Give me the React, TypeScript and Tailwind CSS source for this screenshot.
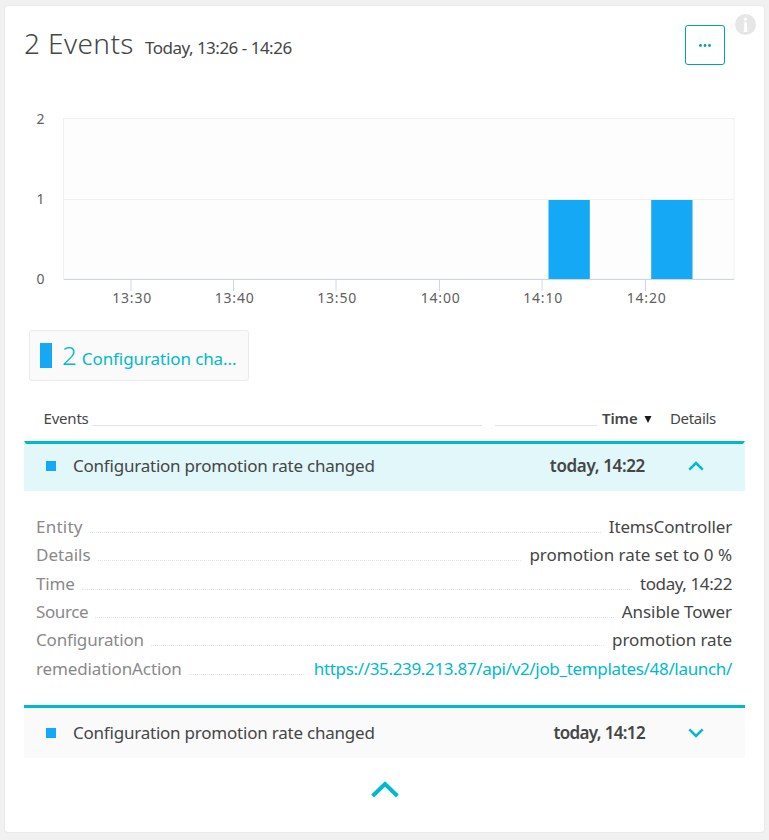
import React from "react";

const ticks = [
  { x: 131, label: "13:30" },
  { x: 233.5, label: "13:40" },
  { x: 336, label: "13:50" },
  { x: 439.5, label: "14:00" },
  { x: 542, label: "14:10" },
  { x: 645.5, label: "14:20" },
];

const details = [
  { label: "Entity", labelClass: "tracking-[0.25px]", value: "ItemsController", valueClass: "tracking-[-0.16px]" },
  { label: "Details", labelClass: "", value: "promotion rate set to 0 %", valueClass: "tracking-[-0.02px]" },
  { label: "Time", labelClass: "tracking-[-0.2px]", value: "today, 14:22", valueClass: "tracking-[-0.4px]" },
  { label: "Source", labelClass: "tracking-[-0.4px]", value: "Ansible Tower", valueClass: "tracking-[-0.05px]" },
  { label: "Configuration", labelClass: "tracking-[-0.18px]", value: "promotion rate", valueClass: "tracking-[-0.1px]" },
  {
    label: "remediationAction",
    labelClass: "tracking-[-0.12px]",
    value: "https://35.239.213.87/api/v2/job_templates/48/launch/",
    valueClass: "tracking-[-0.33px] text-[#00b9cc]",
  },
];

function Chart() {
  return (
    <svg className="block" width="759" height="210" viewBox="5 100 759 210">
      <rect x="63.5" y="118.5" width="670.5" height="160.5" fill="#fdfdfd" stroke="#f0f0f0" />
      <path d="M64 199.5H734" stroke="#f0f0f0" />
      <rect x="548.5" y="200" width="41.3" height="79" fill="#14a8f5" />
      <rect x="651.2" y="200" width="41.3" height="79" fill="#14a8f5" />
      <path d="M64 279.5H734" stroke="#ccd6eb" />
      <g fill="#606060" fontSize="14" fontFamily="'Noto Sans', sans-serif">
        <text x="36.5" y="124">2</text>
        <text x="36.5" y="204">1</text>
        <text x="36.5" y="284">0</text>
        {ticks.map((t) => (
          <g key={t.label}>
            <path d={`M${t.x} 279V291`} stroke="#ccd6eb" />
            <text x={t.x + 0.7} y="303" textAnchor="middle" textLength="39" fontSize="14">
              {t.label}
            </text>
          </g>
        ))}
      </g>
    </svg>
  );
}

function Chevron({ down = false }: { down?: boolean }) {
  return (
    <svg width="16" height="10" viewBox="0 0 16 10" fill="none" stroke="#00b9cc" strokeWidth="2.5">
      <path d={down ? "M1.3 1.4L8 7.9L14.7 1.4" : "M1.3 8.6L8 2.1L14.7 8.6"} />
    </svg>
  );
}

function EventRow({ time, timeClass, open }: { time: string; timeClass: string; open?: boolean }) {
  return (
    <div
      className={
        open
          ? "flex h-[50px] items-center border-x-2 border-t-[3px] border-x-transparent border-t-[#00b9cc] bg-[#e1f7fa] pr-[39px] pb-[3px] pl-5"
          : "flex h-[53px] items-center border-t-[3px] border-[#00b9cc] bg-[#fafafa] pr-[41px] pl-[22px]"
      }
    >
      <span className="size-2.5 bg-[#14a8f5]" />
      <span className="ml-[17px] flex-1 text-[17px] leading-6 tracking-[-0.22px]">
        Configuration promotion rate changed
      </span>
      <span className={`mr-[43px] text-[17px] leading-6 font-semibold ${timeClass}`}>{time}</span>
      <Chevron down={!open} />
    </div>
  );
}

export default function App() {
  return (
    <div className="h-[840px] w-[769px] bg-[#f1f1f1] pt-1.5 pl-[5px] font-['Noto_Sans',sans-serif] text-[#454646]">
      <div className="h-[826px] w-[759px] rounded-[3px] bg-white shadow-[0_0_0_1px_#eaeaea]">
        <header className="flex h-[94px] items-start pr-2 pl-[19px]">
          <div className="flex flex-1 items-baseline gap-[11px] pt-[17px]">
            <h1 className="text-[28px] leading-10 font-light tracking-[0.4px]">2 Events</h1>
            <span className="text-[17px] tracking-[-0.5px]">Today, 13:26 - 14:26</span>
          </div>
          <button className="mt-[19px] flex size-10 items-center justify-center rounded-[3px] border border-[#00a1b2]">
            <svg width="12" height="3" viewBox="0 0 12 3" fill="#00a1b2">
              <circle cx="1.5" cy="1.5" r="1.4" />
              <circle cx="6" cy="1.5" r="1.4" />
              <circle cx="10.5" cy="1.5" r="1.4" />
            </svg>
          </button>
          <svg className="mt-2 ml-2.5" width="21" height="21" viewBox="0 0 21 21">
            <circle cx="10.5" cy="10.5" r="10.5" fill="#e6e6e6" />
            <circle cx="10.5" cy="5.1" r="1.8" fill="#fff" />
            <path d="M8.3 8.2H12.1V17L12.8 17.5V18H8.3V17.5L9.2 17V9.2L8.3 8.8Z" fill="#fff" />
          </svg>
        </header>

        <Chart />

        <div className="mt-5 ml-6 flex h-[51px] w-[220px] items-center rounded-[3px] border border-[#ebebeb] bg-[#fafafa] pl-2.5 text-[#00b9cc]">
          <span className="h-[25px] w-3 bg-[#14a8f5]" />
          <span className="ml-2.5 flex items-baseline pb-0.5">
            <span className="text-[26px] leading-9 font-[350]">2</span>
            <span className="ml-[5px] text-[17px] tracking-[-0.1px]">Configuration cha...</span>
          </span>
        </div>

        <div className="flex h-[60px] items-end pr-[48px] pb-[13px] pl-[37px] text-[15px] leading-5">
          <span className="w-[50px] pl-[1.5px] tracking-[-0.2px]">Events</span>
          <span className="mb-[2px] w-[390px] border-b border-[#e3e3e3]" />
          <span className="mb-[2px] ml-[13px] w-[102px] border-b border-[#e3e3e3]" />
          <span className="ml-[5px] font-semibold tracking-[-0.1px]">Time</span>
          <svg className="mb-[5px] ml-[6px]" width="8" height="7" viewBox="0 0 8 7">
            <path d="M0.5 0H7.5L4 7Z" fill="#191919" />
          </svg>
          <span className="flex-1 text-right tracking-[-0.3px]">Details</span>
        </div>

        <div className="mx-[19px]">
          <EventRow time="today, 14:22" timeClass="tracking-[-0.35px]" open />
          <dl className="h-[214px] pt-[22.1px] pr-[13px] pl-3 text-[17px]">
            {details.map((d) => (
              <div key={d.label} className="flex h-[28.33px] items-baseline leading-[28.33px]">
                <dt className={`text-[#898989] ${d.labelClass}`}>{d.label}</dt>
                <span className="mr-2 ml-[7px] flex-1 border-b border-dotted border-[#e2e2e2]" />
                <dd className={d.valueClass}>{d.value}</dd>
              </div>
            ))}
          </dl>
          <EventRow time="today, 14:12" timeClass="tracking-[-0.65px]" />
        </div>

        <div className="flex justify-center pt-[23px]">
          <svg width="28" height="17" viewBox="0 0 28 17" fill="none" stroke="#00b9cc" strokeWidth="4">
            <path d="M1.6 15L14 3L26.4 15" />
          </svg>
        </div>
      </div>
    </div>
  );
}
